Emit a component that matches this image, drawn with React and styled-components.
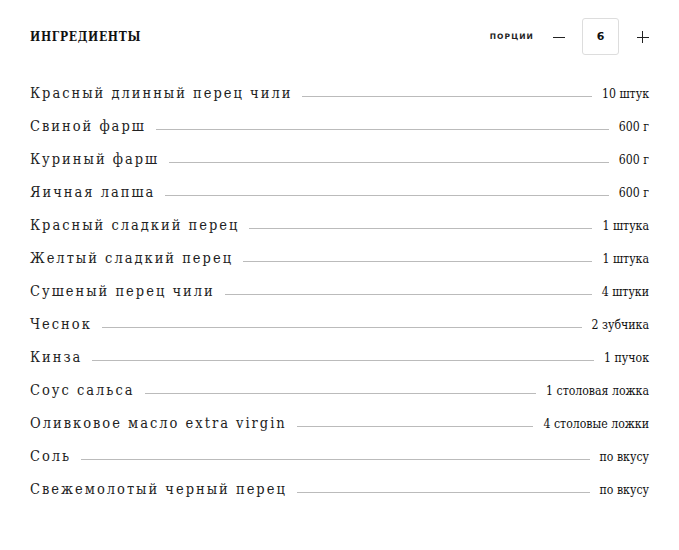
import React, { useState } from "react";
import styled, { createGlobalStyle } from "styled-components";

const GlobalStyle = createGlobalStyle`
  body {
    margin: 0;
    background: #fff;
    color: #111;
  }
`;

const Wrapper = styled.div`
  width: 679px;
  padding: 18px 30px 0 30px;
  box-sizing: border-box;
`;

const Header = styled.div`
  display: flex;
  align-items: center;
  justify-content: space-between;
  height: 37px;
  margin-bottom: 30px;
`;

const Title = styled.h3`
  margin: 0;
  font-family: "DejaVu Serif Condensed", "DejaVu Serif", serif;
  font-weight: bold;
  font-size: 12px;
  letter-spacing: 0.7px;
  color: #111;
`;

const Counter = styled.div`
  display: flex;
  align-items: center;
`;

const CounterLabel = styled.span`
  font-family: "DejaVu Sans", sans-serif;
  font-weight: bold;
  font-size: 7.5px;
  letter-spacing: 1.1px;
  margin-right: 19px;
  color: #222;
`;

const StepButton = styled.button`
  border: none;
  background: none;
  padding: 0;
  height: 37px;
  display: flex;
  align-items: center;
  justify-content: center;
  cursor: pointer;
  color: #222;
`;

const CountBox = styled.div`
  width: 37px;
  height: 37px;
  box-sizing: border-box;
  border: 1px solid #ddd;
  border-radius: 3px;
  display: flex;
  align-items: center;
  justify-content: center;
  font-family: "DejaVu Sans", sans-serif;
  font-weight: bold;
  font-size: 11px;
  color: #111;
  margin: 0 18px 0 17px;
`;

const List = styled.ul`
  list-style: none;
  margin: 0;
  padding: 0;
`;

const Row = styled.li`
  display: flex;
  align-items: baseline;
  height: 33px;
`;

const Name = styled.span`
  font-family: "DejaVu Serif Condensed", "DejaVu Serif", serif;
  font-size: 14.5px;
  letter-spacing: 2px;
  color: #222;
  white-space: nowrap;
`;

const Leader = styled.span`
  flex: 1;
  border-bottom: 1px solid #bbb;
  margin: 0 10px 0 10px;
  transform: translateY(-1px);
`;

const Amount = styled.span`
  font-family: "DejaVu Serif Condensed", "DejaVu Serif", serif;
  font-size: 12.2px;
  color: #111;
  white-space: nowrap;
`;

const ingredients = [
  ["Красный длинный перец чили", "10 штук"],
  ["Свиной фарш", "600 г"],
  ["Куриный фарш", "600 г"],
  ["Яичная лапша", "600 г"],
  ["Красный сладкий перец", "1 штука"],
  ["Желтый сладкий перец", "1 штука"],
  ["Сушеный перец чили", "4 штуки"],
  ["Чеснок", "2 зубчика"],
  ["Кинза", "1 пучок"],
  ["Соус сальса", "1 столовая ложка"],
  ["Оливковое масло extra virgin", "4 столовые ложки"],
  ["Соль", "по вкусу"],
  ["Свежемолотый черный перец", "по вкусу"],
];

export default function App() {
  const [portions, setPortions] = useState(6);

  return (
    <Wrapper>
      <GlobalStyle />
      <Header>
        <Title>ИНГРЕДИЕНТЫ</Title>
        <Counter>
          <CounterLabel>ПОРЦИИ</CounterLabel>
          <StepButton onClick={() => setPortions(p => Math.max(1, p - 1))}>
            <svg width="12" height="12" viewBox="0 0 12 12">
              <path d="M0 6.5h12" stroke="#222" strokeWidth="1" />
            </svg>
          </StepButton>
          <CountBox>{portions}</CountBox>
          <StepButton onClick={() => setPortions(p => p + 1)}>
            <svg width="12" height="12" viewBox="0 0 12 12">
              <path d="M0 6.5h12M5.5 0v12" stroke="#222" strokeWidth="1" />
            </svg>
          </StepButton>
        </Counter>
      </Header>
      <List>
        {ingredients.map(([name, amount]) => (
          <Row key={name}>
            <Name>{name}</Name>
            <Leader />
            <Amount>{amount}</Amount>
          </Row>
        ))}
      </List>
    </Wrapper>
  );
}
